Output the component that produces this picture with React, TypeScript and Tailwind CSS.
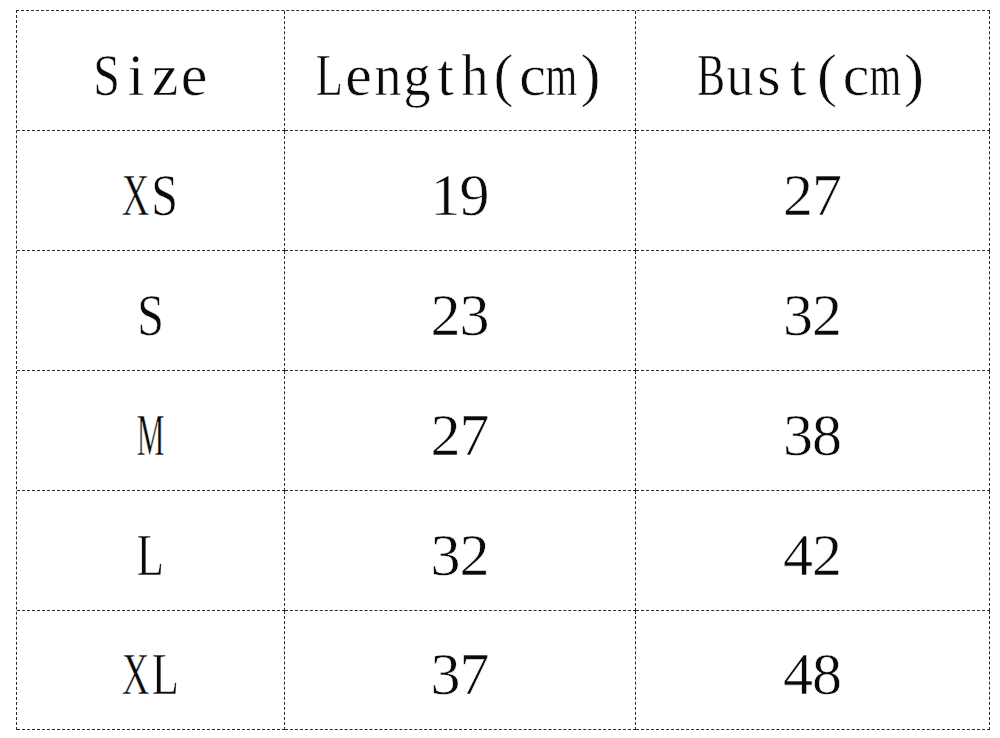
import React from "react";

const scaleClass: Record<string, string> = {
  S: "scale-x-[0.8]",
  X: "scale-x-[0.64]",
  M: "scale-x-[0.52]",
  L: "scale-x-[0.74]",
  B: "scale-x-[0.7]",
  m: "scale-x-[0.68]",
  n: "scale-x-[0.9]",
  h: "scale-x-[0.9]",
  g: "scale-x-[0.9]",
  u: "scale-x-[0.9]",
};

function Mono({ text }: { text: string }) {
  return (
    <span className="inline-flex">
      {text.split("").map((ch, i) => (
        <span key={i} className="inline-flex w-[29px] justify-center overflow-visible">
          <span className={"inline-block origin-center " + (scaleClass[ch] ?? "")}>{ch}</span>
        </span>
      ))}
    </span>
  );
}

const rows: [string, string, string][] = [
  ["XS", "19", "27"],
  ["S", "23", "32"],
  ["M", "27", "38"],
  ["L", "32", "42"],
  ["XL", "37", "48"],
];

function Cell({ text, last }: { text: string; last?: boolean }) {
  return (
    <div
      className={
        "flex items-center justify-center border-r border-b border-dashed border-[#2a2a2a] pt-[8px] " +
        (last ? "h-[119px]" : "h-[120px]")
      }
    >
      <Mono text={text} />
    </div>
  );
}

export default function App() {
  return (
    <div className="w-[1000px] h-[738px] bg-white overflow-hidden pt-[10px] pl-[16px]">
      <div
        className="grid grid-cols-[268px_351px_354px] w-[974px] border-l border-t border-dashed border-[#2a2a2a] text-[60px] leading-none text-[#0a0a0a] [-webkit-text-stroke:0.6px_white]"
        style={{ fontFamily: '"Liberation Serif", "Times New Roman", serif' }}
      >
        <Cell text="Size" />
        <Cell text="Length(cm)" />
        <Cell text="Bust(cm)" />
        {rows.map((r, i) => (
          <React.Fragment key={i}>
            <Cell text={r[0]} last={i === rows.length - 1} />
            <Cell text={r[1]} last={i === rows.length - 1} />
            <Cell text={r[2]} last={i === rows.length - 1} />
          </React.Fragment>
        ))}
      </div>
    </div>
  );
}
